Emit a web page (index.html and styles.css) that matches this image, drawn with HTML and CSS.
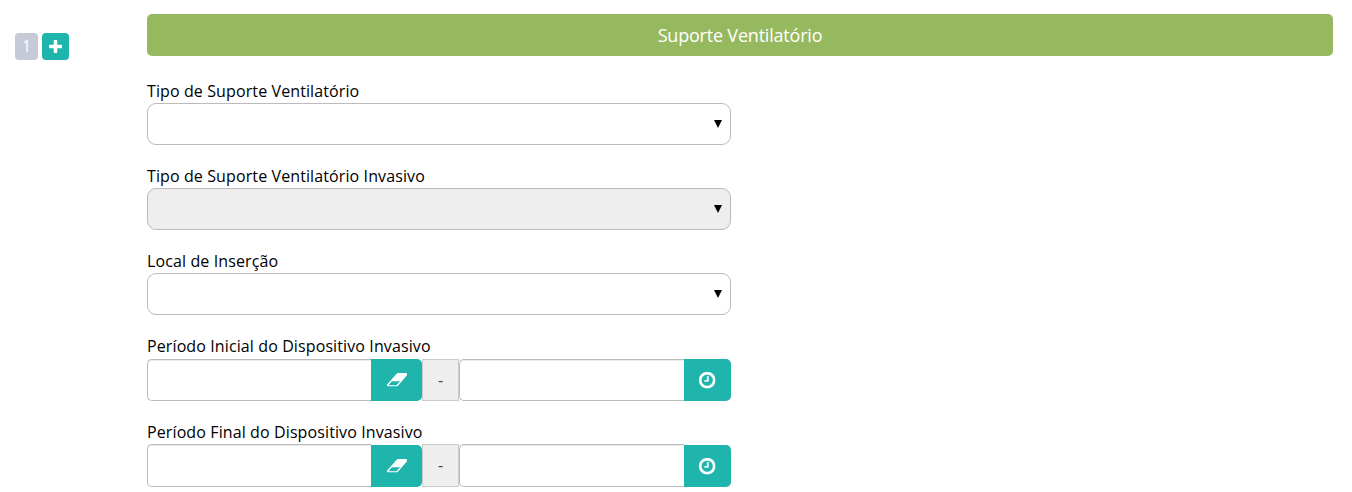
FILE: index.html
```
<!DOCTYPE html>
<html lang="pt-br">
<head>
    <meta charset="UTF-8">
    <title>Suporte Ventilatório</title>
    <link rel="stylesheet" href="styles.css">
</head>
<body>
    <svg class="icon-defs" width="0" height="0">
        <symbol id="icon-plus" viewBox="192 128 1408 1408">
            <path d="M1600 736v192q0 40-28 68t-68 28h-416v416q0 40-28 68t-68 28h-192q-40 0-68-28t-28-68v-416h-416q-40 0-68-28t-28-68v-192q0-40 28-68t68-28h416v-416q0-40 28-68t68-28h192q40 0 68 28t28 68v416h416q40 0 68 28t28 68z"/>
        </symbol>
        <symbol id="icon-eraser" viewBox="64 256 1920 1280">
            <path d="M960 1408l336-384h-768l-336 384h768zm1013-1077q15 34 9.5 71.5t-30.5 65.5l-896 1024q-38 44-96 44h-768q-38 0-69.500-20.500t-47.500-54.500q-15-34-9.500-71.500t30.500-65.500l896-1024q38-44 96-44h768q38 0 69.500 20.500t47.500 54.500z"/>
        </symbol>
        <symbol id="icon-clock" viewBox="128 128 1536 1536">
            <path d="M1024 544v448q0 14-9 23t-23 9h-320q-14 0-23-9t-9-23v-64q0-14 9-23t23-9h224v-352q0-14 9-23t23-9h64q14 0 23 9t9 23zm416 352q0-148-73-273t-198-198-273-73-273 73-198 198-73 273 73 273 198 198 273 73 273-73 198-198 73-273zm224 0q0 209-103 385.500t-279.500 279.500-385.500 103-385.500-103-279.500-279.500-103-385.500 103-385.500 279.500-279.500 385.500-103 385.500 103 279.500 279.500 103 385.500z"/>
        </symbol>
    </svg>
    <div class="row">
        <div class="row-actions">
            <span class="row-number">1</span>
            <button class="btn btn-add" type="button" aria-label="Adicionar"><svg class="icon-plus"><use href="#icon-plus"/></svg></button>
        </div>
        <form class="row-content">
            <h2 class="title">Suporte Ventilatório</h2>
            <div class="form-group">
                <label for="tipo">Tipo de Suporte Ventilatório</label>
                <div class="select-box">
                    <select id="tipo" class="select"><option></option></select>
                    <span class="caret"></span>
                </div>
            </div>
            <div class="form-group">
                <label for="tipo-invasivo">Tipo de Suporte Ventilatório Invasivo</label>
                <div class="select-box">
                    <select id="tipo-invasivo" class="select" disabled><option></option></select>
                    <span class="caret"></span>
                </div>
            </div>
            <div class="form-group">
                <label for="local">Local de Inserção</label>
                <div class="select-box">
                    <select id="local" class="select"><option></option></select>
                    <span class="caret"></span>
                </div>
            </div>
            <div class="form-group form-group-date">
                <label for="inicio-data">Período Inicial do Dispositivo Invasivo</label>
                <div class="input-group">
                    <input id="inicio-data" class="input" type="text">
                    <button class="btn btn-erase" type="button" aria-label="Limpar"><svg class="icon-eraser"><use href="#icon-eraser"/></svg></button>
                    <span class="addon">-</span>
                    <input class="input input-time" type="text">
                    <button class="btn btn-clock" type="button" aria-label="Hora"><svg class="icon-clock"><use href="#icon-clock"/></svg></button>
                </div>
            </div>
            <div class="form-group form-group-date">
                <label for="fim-data">Período Final do Dispositivo Invasivo</label>
                <div class="input-group">
                    <input id="fim-data" class="input" type="text">
                    <button class="btn btn-erase" type="button" aria-label="Limpar"><svg class="icon-eraser"><use href="#icon-eraser"/></svg></button>
                    <span class="addon">-</span>
                    <input class="input input-time" type="text">
                    <button class="btn btn-clock" type="button" aria-label="Hora"><svg class="icon-clock"><use href="#icon-clock"/></svg></button>
                </div>
            </div>
        </form>
    </div>
</body>
</html>
```

FILE: styles.css
```
* {
    box-sizing: border-box;
}
body {
    font-family: "Open Sans", Arial, sans-serif;
    font-size: 16px;
    color: #000;
    background: #fff;
    margin: 0;
    overflow: hidden;
}
.icon-defs {
    display: none;
}
svg {
    display: block;
    fill: currentColor;
}
.row {
    display: flex;
    padding: 14px 19px 0 15px;
}
.row-actions {
    display: flex;
    align-items: flex-start;
    gap: 4px;
    width: 132px;
    padding-top: 19px;
}
.row-number {
    width: 23px;
    height: 27px;
    line-height: 27px;
    text-align: center;
    color: #fff;
    background: #c6cad6;
    border-radius: 4px;
}
.row-content {
    flex: 1;
}
.btn {
    display: flex;
    align-items: center;
    justify-content: center;
    padding: 0;
    border: none;
    color: #fff;
    background: #20b5ac;
    cursor: pointer;
}
.btn-add {
    width: 27px;
    height: 27px;
    border-radius: 4px;
}
.icon-plus {
    width: 13px;
    height: 13px;
}
.title {
    height: 42px;
    line-height: 42px;
    margin: 0 0 24px;
    text-align: center;
    font-size: 18px;
    font-weight: 400;
    letter-spacing: -0.2px;
    color: #fff;
    background: #96b960;
    border-radius: 5px;
}
.form-group {
    width: 584px;
    margin-bottom: 20px;
}
.form-group label {
    display: block;
    height: 23px;
    line-height: 22px;
    letter-spacing: 0.11px;
}
.form-group-date label {
    height: 24px;
}
.select-box {
    position: relative;
}
.select {
    display: block;
    appearance: none;
    width: 100%;
    height: 42px;
    padding: 0 30px 0 12px;
    font: inherit;
    background: #fff;
    border: 1px solid #bbb;
    border-radius: 9px;
}
.select:disabled {
    background: #eee;
    opacity: 1;
}
.caret {
    position: absolute;
    right: 9px;
    top: 17px;
    border: 4px solid transparent;
    border-top: 8px solid #000;
    border-bottom: none;
    pointer-events: none;
}
.input-group {
    display: flex;
    height: 42px;
}
.input {
    width: 224px;
    padding: 0 12px;
    font: inherit;
    background: #fff;
    border: 1px solid #bbb;
    border-right: none;
    border-radius: 5px 0 0 5px;
    box-shadow: inset 0 1px 1px rgba(0,0,0,0.08);
}
.input-time {
    width: 225px;
}
.btn-erase {
    width: 51px;
    padding-left: 1px;
    border-radius: 0 5px 5px 0;
}
.btn-clock {
    width: 47px;
    border-radius: 0 5px 5px 0;
}
.addon {
    width: 37px;
    line-height: 40px;
    text-align: center;
    color: #444;
    background: #eee;
    border: 1px solid #ccc;
}
.form-group-date:last-child .input,
.form-group-date:last-child .addon {
    margin-top: -1px;
}
.icon-eraser {
    width: 20.4px;
    height: 13.6px;
}
.icon-clock {
    width: 16.4px;
    height: 16.4px;
    stroke: currentColor;
    stroke-width: 35px;
    overflow: visible;
}
```
